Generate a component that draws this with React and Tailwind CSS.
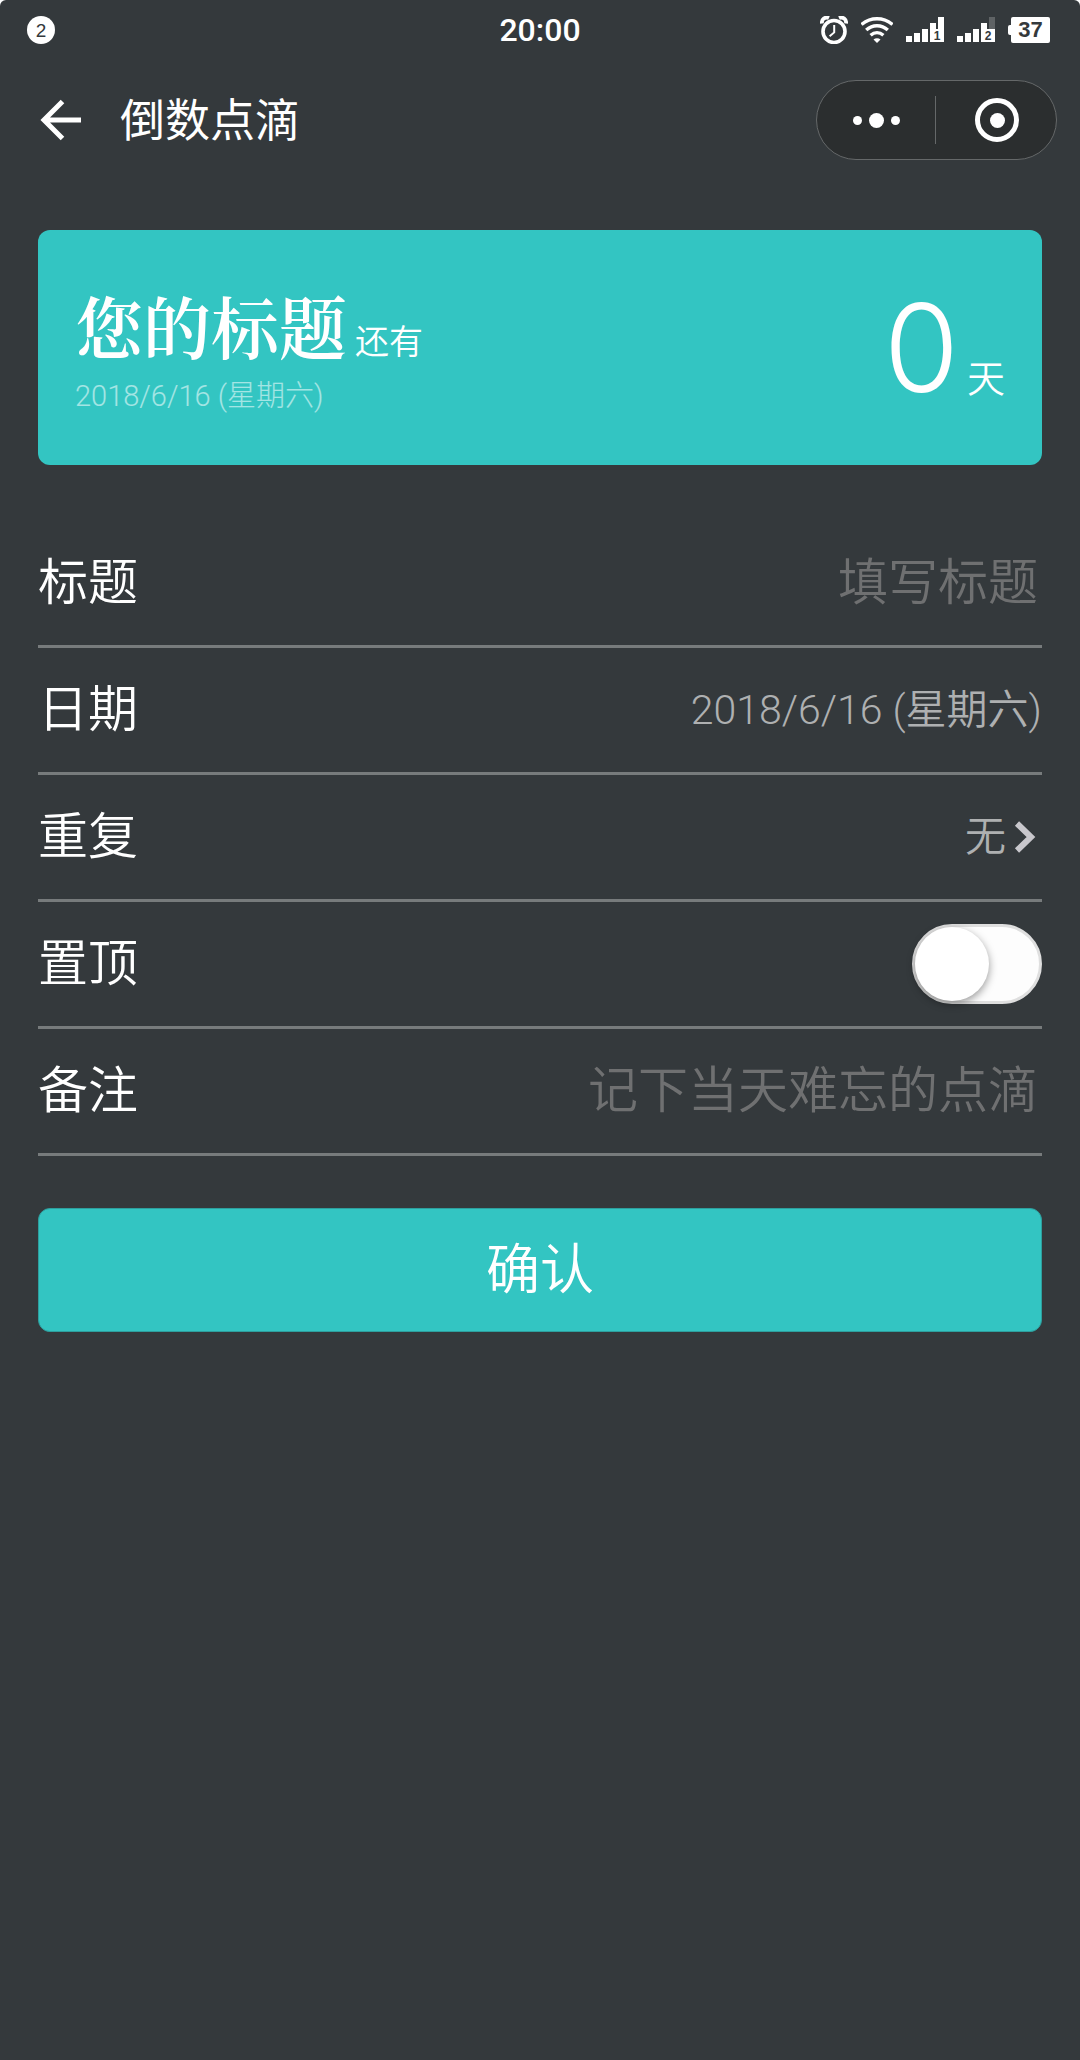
import { useState } from 'react';

const SANS = "font-['Liberation_Sans','Noto_Sans_CJK_SC',sans-serif]";
const THIN = "font-['Roboto','Noto_Sans_CJK_SC',sans-serif]";
const SERIF = "font-['Noto_Serif_CJK_SC','Noto_Serif_SC','Noto_Sans_CJK_SC',serif]";

function AlarmIcon() {
  return (
    <svg width="28" height="28" viewBox="0 0 28 28" fill="none" stroke="#fff">
      <path d="M2 7.5A5 5 0 0 1 9 2M26 7.5A5 5 0 0 0 19 2" strokeWidth="3.8" />
      <circle cx="14" cy="15.5" r="11" strokeWidth="3.6" />
      <path d="M14.2 9v7.4l-4.6 3.8" strokeWidth="2" />
    </svg>
  );
}

function WifiIcon() {
  return (
    <svg width="32" height="28" viewBox="1 0 32 28" fill="none" stroke="#fff" strokeWidth="3.4">
      <path d="M1.500 8.500C10.500 .8 23.500 .8 32.500 8.500" />
      <path d="M6.200 14C12.500 8.300 21.500 8.300 27.800 14" />
      <path d="M10.600 19.200C14.500 15.800 19.500 15.800 23.400 19.200" />
      <path d="M17 27l-3.500-3.500c2-1.800 5-1.800 7 0z" fill="#fff" stroke="none" />
    </svg>
  );
}

function SignalIcon({ sim, weak }) {
  return (
    <svg width="38" height="26" viewBox="0 0 38 26" fill="#fff">
      <path d="M0 19h6v6H0zM8 16h6v9H8zM16 12h6v13h-6z" />
      {weak ? (
        <>
          <path d="M24 6h6v6h8v13H24z" />
          <path d="M32 0h6v12h-6z" fill="#5f6365" />
        </>
      ) : (
        <path d="M24 6h6v6h2V0h6v25H24z" />
      )}
      <text x="31" y="23" textAnchor="middle" fontSize="12" fontWeight="700" fill="#34393c" className={SANS}>{sim}</text>
    </svg>
  );
}

function StatusBar() {
  return (
    <div className="grid h-15 grid-cols-3 items-center pr-[30px] pl-[27px]">
      <span className="flex size-7 items-center justify-center rounded-full bg-white text-[19px] leading-none text-[#34393c]">2</span>
      <span className="justify-self-center pl-[3px] font-['Roboto',sans-serif] text-[32px] leading-none font-medium">20:00</span>
      <div className="flex items-center gap-[13px] justify-self-end">
        <AlarmIcon />
        <WifiIcon />
        <SignalIcon sim="1" />
        <SignalIcon sim="2" weak />
        <div className="flex items-center">
          <span className="h-[10px] w-[3px] rounded-l-xs bg-white" />
          <span className="flex h-[26px] w-[39px] items-center justify-center rounded-xs bg-white text-[22px] leading-none font-bold text-[#34393c]">37</span>
        </div>
      </div>
    </div>
  );
}

function NavBar() {
  return (
    <header className="flex h-30 items-center pr-[23px] pl-10">
      <button aria-label="返回" className="mr-[38px]">
        <svg width="42" height="42" viewBox="0 0 42 42" fill="none" stroke="#fff" strokeWidth="5">
          <path d="M22.500 2.500L4 21l18.500 18.500M4 21h37" />
        </svg>
      </button>
      <h1 className="flex-1 pt-0.5 text-[45px] leading-none">倒数点滴</h1>
      <div className="flex h-20 w-[241px] items-center rounded-full border border-[#656869] bg-[#2b2e2f]">
        <button aria-label="更多" className="flex flex-1 items-center justify-center gap-[7px]">
          <span className="size-[9px] rounded-full bg-white" />
          <span className="size-[15px] rounded-full bg-white" />
          <span className="size-[9px] rounded-full bg-white" />
        </button>
        <span className="h-12 w-px bg-[#656869]" />
        <button aria-label="关闭" className="flex flex-1 justify-center pl-0.5">
          <span className="flex size-11 items-center justify-center rounded-full border-5 border-white">
            <span className="size-[15px] rounded-full bg-white" />
          </span>
        </button>
      </div>
    </header>
  );
}

function PreviewCard({ title, date, days }) {
  return (
    <section className="mt-[50px] flex h-[235px] items-center justify-between rounded-xl bg-[#33c5c2] px-[37px]">
      <div>
        <p className="flex items-baseline gap-2 leading-[80px]">
          <span className={`${SERIF} text-[68px] font-semibold`}>{title}</span>
          <span className="text-[34px] font-[350]">还有</span>
        </p>
        <p className={`${THIN} text-[29px] leading-[28px] font-light text-white/55`}>{date}</p>
      </div>
      <p className="flex items-baseline gap-2 leading-none">
        <span className="font-['Inter',sans-serif] text-[122px] font-light">{days}</span>
        <span className="text-[38px] font-[350]">天</span>
      </p>
    </section>
  );
}

function Row({ label, id, children }) {
  return (
    <div className="flex h-[127px] items-center justify-between border-b-3 border-[#777b7c]">
      <label htmlFor={id} className="shrink-0 text-[50px] leading-none font-[350]">{label}</label>
      {children}
    </div>
  );
}

const inputClass = 'min-w-0 flex-1 bg-transparent pr-1 text-right text-[50px] leading-[60px] font-[350] outline-none placeholder:text-[#6f7071]';

export default function App() {
  const [title, setTitle] = useState('');
  const [note, setNote] = useState('');
  const [pinned, setPinned] = useState(false);
  const date = '2018/6/16 (星期六)';

  return (
    <div lang="zh-CN" className="bg-white">
      <div className={`${SANS} min-h-screen rounded-t-md bg-[#34393c] text-white`}>
        <StatusBar />
        <NavBar />
        <main className="px-[38px]">
          <PreviewCard title={title || '您的标题'} date={date} days={0} />

          <form className="mt-14" onSubmit={e => e.preventDefault()}>
            <Row label="标题" id="title">
              <input id="title" value={title} onChange={e => setTitle(e.target.value)} placeholder="填写标题" className={inputClass} />
            </Row>
            <Row label="日期" id="date">
              <button id="date" type="button" className={`${THIN} text-[41px] leading-none font-[350] text-[#aeb0b1]`}>{date}</button>
            </Row>
            <Row label="重复" id="repeat">
              <button id="repeat" type="button" className="flex items-center gap-2 pr-1.5 text-[41px] leading-none font-[350] text-[#aeb0b1]">
                无
                <svg width="22" height="32" viewBox="0 0 22 32" fill="none" stroke="#c8c7cc" strokeWidth="6">
                  <path d="M3 2.500L17 16 3 29.500" />
                </svg>
              </button>
            </Row>
            <Row label="置顶" id="pinned">
              <span className="relative h-20 w-[130px]">
                <input
                  id="pinned"
                  type="checkbox"
                  role="switch"
                  checked={pinned}
                  onChange={e => setPinned(e.target.checked)}
                  className="peer size-full appearance-none rounded-full border-[3px] border-[#dfdfdf] bg-[#fdfdfd] checked:bg-[#33c5c2]"
                />
                <span className="pointer-events-none absolute top-[3px] left-[3px] size-[74px] rounded-full bg-white shadow-[0_3px_8px_rgba(0,0,0,0.4)] peer-checked:left-[53px]" />
              </span>
            </Row>
            <Row label="备注" id="note">
              <input id="note" value={note} onChange={e => setNote(e.target.value)} placeholder="记下当天难忘的点滴" className={inputClass} />
            </Row>

            <button type="submit" className="mt-[52px] h-[124px] w-full rounded-xl border border-[#2d9f9e] bg-[#33c5c2] text-[54px] leading-none font-[350]">
              确认
            </button>
          </form>
        </main>
      </div>
    </div>
  );
}
